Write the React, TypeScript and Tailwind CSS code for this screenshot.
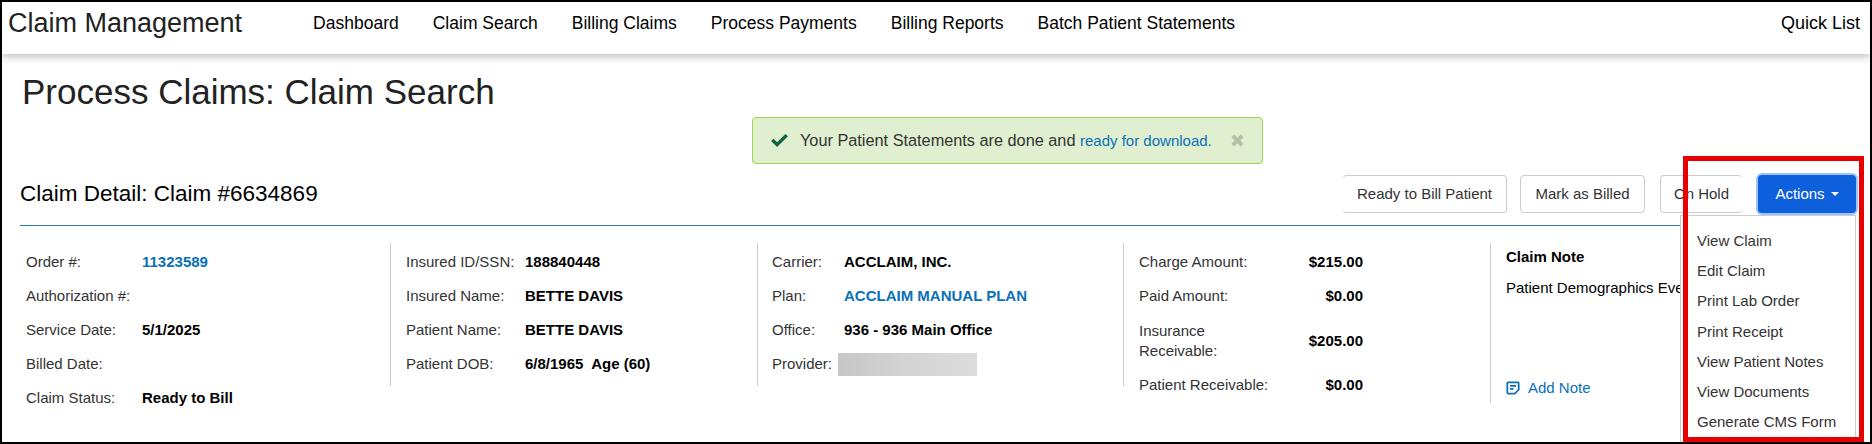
const navItems = [
  "Dashboard",
  "Claim Search",
  "Billing Claims",
  "Process Payments",
  "Billing Reports",
  "Batch Patient Statements",
];

const menuItems = [
  "View Claim",
  "Edit Claim",
  "Print Lab Order",
  "Print Receipt",
  "View Patient Notes",
  "View Documents",
  "Generate CMS Form",
];

function Row({ label, width, children }: { label: string; width: string; children?: React.ReactNode }) {
  return (
    <div className="flex h-[34px] items-center">
      <span className={`${width} shrink-0 text-[#333]`}>{label}</span>
      {children}
    </div>
  );
}

function Value({ children, link }: { children: React.ReactNode; link?: boolean }) {
  return <span className={`font-bold whitespace-nowrap ${link ? "text-[#0a70b8]" : "text-black"}`}>{children}</span>;
}

export default function App() {
  return (
    <div className="relative h-[444px] w-[1872px] overflow-hidden border-2 border-black bg-white font-['Liberation_Sans',Arial,sans-serif] text-[15px] leading-[20px] text-[#333]">
      <header className="flex h-[52px] items-center bg-white pr-[10px] pb-[10px] pl-[6px] text-black shadow-[0_3px_8px_rgba(0,0,0,0.25)]">
        <span className="mr-[71px] text-[27px] leading-[32px] text-[#222]">Claim Management</span>
        <nav className="flex gap-[34px] text-[17.5px]">
          {navItems.map((item) => (
            <span key={item}>{item}</span>
          ))}
        </nav>
        <span className="ml-auto text-[18px]">Quick List</span>
      </header>

      <main className="px-[18px]">
        <h1 className="mt-[18px] ml-[2px] text-[35px] leading-[40px] text-[#222]">Process Claims: Claim Search</h1>

        <div className="mt-[5px] ml-[732px] flex h-[47px] w-[511px] items-center rounded border border-[#9fd44f] bg-[#e0efd0] pl-[17px]">
          <svg viewBox="0 0 20 16" className="h-[15px] w-[19px] fill-[#0f6345]">
            <path d="M1 8.5 3.6 6 7.4 9.8 16.4 1 19 3.5 7.4 15z" />
          </svg>
          <span className="ml-[11px] text-[16.3px] whitespace-nowrap">
            Your Patient Statements are done and <span className="text-[15px] text-[#0a70b8]">ready for download.</span>
          </span>
          <svg viewBox="0 0 14 14" className="ml-[19px] h-[13px] w-[13px] fill-[#b4bfa8]">
            <path d="M3.5 0.5 7 4 10.5 0.5 13.5 3.5 10 7 13.5 10.5 10.5 13.5 7 10 3.5 13.5 0.5 10.5 4 7 0.5 3.5z" />
          </svg>
        </div>

        <div className="mt-[11px] flex h-[38px] items-center">
          <h2 className="text-[22.5px] text-black">Claim Detail: Claim #6634869</h2>
          <div className="ml-auto flex gap-[13px]">
            <button className="h-[38px] w-[164px] rounded border border-l-0 border-[#ccc] text-[#333]">Ready to Bill Patient</button>
            <button className="mr-[2px] h-[38px] w-[125px] rounded border border-[#ccc] text-[#333]">Mark as Billed</button>
            <button className="mr-[3px] h-[38px] w-[82px] rounded border border-r-0 border-[#ccc] text-[#333]">On Hold</button>
            <button className="mr-[-4px] flex h-[38px] w-[98px] items-center justify-center gap-[6px] rounded bg-[#0d5fdb] text-white ring-2 ring-[#9ec3fb]">
              Actions
              <span className="h-0 w-0 border-x-4 border-t-4 border-x-transparent border-t-white" />
            </button>
          </div>
        </div>

        <div className="mt-[12px] border-t border-[#2b7bb9]" />

        <div className="mt-[17px] flex">
          <div className="h-[143px] w-[371px] border-r border-[#ccc] pt-[2px] pl-[6px]">
            <Row label="Order #:" width="w-[116px]"><Value link>11323589</Value></Row>
            <Row label="Authorization #:" width="w-[116px]" />
            <Row label="Service Date:" width="w-[116px]"><Value>5/1/2025</Value></Row>
            <Row label="Billed Date:" width="w-[116px]" />
            <Row label="Claim Status:" width="w-[116px]"><Value>Ready to Bill</Value></Row>
          </div>
          <div className="h-[143px] w-[367px] border-r border-[#ccc] pt-[2px] pl-[15px]">
            <Row label="Insured ID/SSN:" width="w-[119px]"><Value>188840448</Value></Row>
            <Row label="Insured Name:" width="w-[119px]"><Value>BETTE DAVIS</Value></Row>
            <Row label="Patient Name:" width="w-[119px]"><Value>BETTE DAVIS</Value></Row>
            <Row label="Patient DOB:" width="w-[119px]"><Value>6/8/1965&nbsp; Age (60)</Value></Row>
          </div>
          <div className="h-[143px] w-[366px] border-r border-[#ccc] pt-[2px] pl-[14px]">
            <Row label="Carrier:" width="w-[72px]"><Value>ACCLAIM, INC.</Value></Row>
            <Row label="Plan:" width="w-[72px]"><Value link>ACCLAIM MANUAL PLAN</Value></Row>
            <Row label="Office:" width="w-[72px]"><Value>936 - 936 Main Office</Value></Row>
            <div className="flex h-[34px] items-center">
              <span className="w-[66px] shrink-0">Provider:</span>
              <div className="h-[23px] w-[139px] bg-gradient-to-r from-[#c6c6c6] via-[#d4d4d4] to-[#dcdcdc]" />
            </div>
          </div>
          <div className="h-[160px] w-[367px] border-r border-[#ccc] pt-[2px] pl-[15px]">
            <div className="w-[224px]">
              <div className="flex h-[34px] items-center justify-between"><span>Charge Amount:</span><Value>$215.00</Value></div>
              <div className="flex h-[34px] items-center justify-between"><span>Paid Amount:</span><Value>$0.00</Value></div>
              <div className="flex h-[55px] items-center justify-between"><span>Insurance<br />Receivable:</span><Value>$205.00</Value></div>
              <div className="flex h-[34px] items-center justify-between"><span>Patient Receivable:</span><Value>$0.00</Value></div>
            </div>
          </div>
          <div className="flex h-[165px] flex-col pl-[15px]">
            <div className="mt-[4px] font-bold text-black">Claim Note</div>
            <div className="mt-[11px] whitespace-nowrap text-black">Patient Demographics Event</div>
            <div className="mt-[80px] flex items-center gap-[8px] text-[#0a70b8]">
              <svg viewBox="0 0 16 16" className="h-[14px] w-[14px] fill-none stroke-[#0a70b8] stroke-2">
                <path d="M2.5 1.5h11a1 1 0 0 1 1 1v7.5l-4.5 4.5H2.5a1 1 0 0 1-1-1v-11a1 1 0 0 1 1-1zM4.5 5.5h7M4.5 9h4" />
              </svg>
              Add Note
            </div>
          </div>
        </div>
      </main>

      <div className="absolute top-[213px] left-[1678px] h-[240px] w-[176px] border border-[#ccc] bg-white pt-[10px] pl-[16px] text-[#333]">
        {menuItems.map((item) => (
          <div key={item} className="flex h-[30.2px] items-center whitespace-nowrap">{item}</div>
        ))}
      </div>

      <div className="absolute top-[154px] left-[1681px] h-[286px] w-[181px] border-[5px] border-[#e80000]" />
    </div>
  );
}
